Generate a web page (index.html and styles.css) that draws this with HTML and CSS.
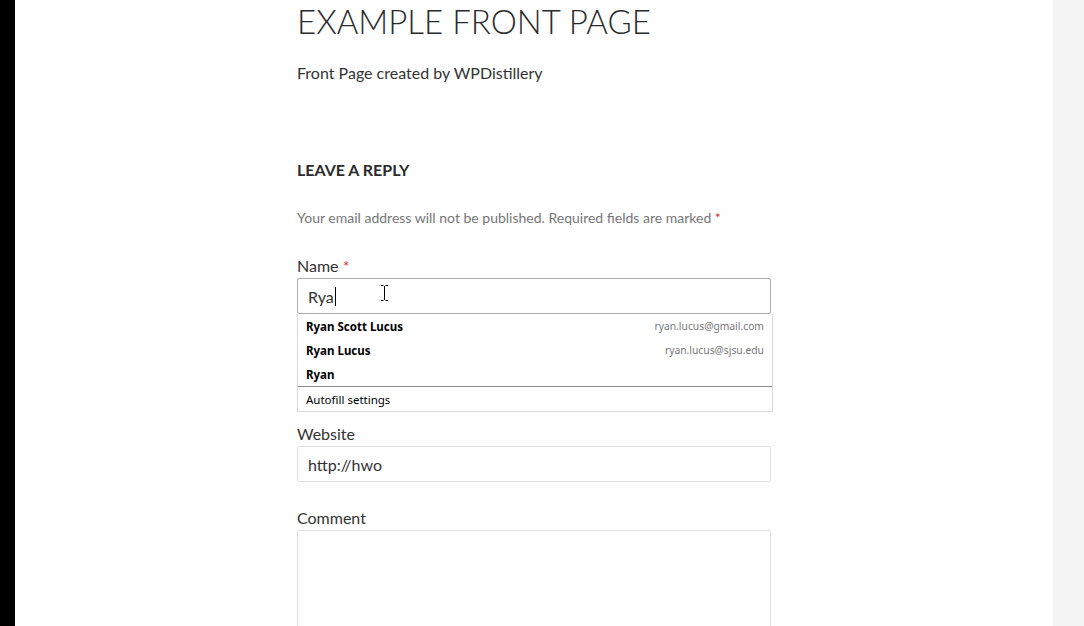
FILE: index.html
```html
<!DOCTYPE html>
<html>
<head>
<meta charset="utf-8">
<link rel="stylesheet" href="styles.css">
</head>
<body>
<div class="frame">
  <div class="strip"></div>
  <main class="page">
    <div class="column">
      <h1 class="title">EXAMPLE FRONT PAGE</h1>
      <p class="subtitle">Front Page created by WPDistillery</p>
      <h3 class="reply-title">LEAVE A REPLY</h3>
      <p class="notes">Your email address will not be published. Required fields are marked <span class="req">*</span></p>
      <div class="field">
        <label class="label">Name <span class="req">*</span></label>
        <div class="input focus"><span class="val">Rya</span><span class="caret"></span>
          <svg class="ibeam" width="9" height="16" viewBox="0 0 9 16"><path d="M1 .5h2.5M5.5.5H8M4.5 1v14M1 15.5h2.5M5.5 15.5H8" stroke="#000" stroke-width="1" fill="none"/></svg>
        </div>
        <div class="autofill">
          <div class="af-row"><span class="af-name">Ryan Scott Lucus</span><span class="af-mail">ryan.lucus@gmail.com</span></div>
          <div class="af-row"><span class="af-name">Ryan Lucus</span><span class="af-mail">ryan.lucus@sjsu.edu</span></div>
          <div class="af-row"><span class="af-name">Ryan</span></div>
          <div class="af-row af-settings">Autofill settings</div>
        </div>
      </div>
      <div class="field covered">
        <label class="label">Email <span class="req">*</span></label>
        <div class="input"></div>
      </div>
      <div class="field">
        <label class="label">Website</label>
        <div class="input"><span class="val">http://hwo</span></div>
      </div>
      <div class="field">
        <label class="label">Comment</label>
        <div class="textarea"></div>
      </div>
    </div>
  </main>
  <div class="side"></div>
</div>
</body>
</html>
```
FILE: styles.css
```css
html, body {
  margin: 0;
  padding: 0;
  height: 100%;
  overflow: hidden;
}
body {
  font-family: Lato, "Liberation Sans", sans-serif;
  color: #333;
  background: #fff;
}
.frame {
  display: flex;
  height: 626px;
  overflow: hidden;
}
.strip {
  width: 15px;
  background: #000;
  flex: none;
}
.page {
  flex: 1;
  background: #fefefe;
  padding-left: 282px;
}
.side {
  width: 31px;
  flex: none;
  background: #f3f3f3;
}
.column {
  width: 474px;
}
.title {
  margin: -1px 0 0;
  font-size: 33px;
  font-weight: 300;
  line-height: 44px;
  color: #2b2b2b;
  letter-spacing: 0;
}
.subtitle {
  margin: 19px 0 0;
  font-size: 16px;
  line-height: 22px;
}
.reply-title {
  margin: 74px 0 0;
  font-size: 16px;
  font-weight: 700;
  line-height: 24px;
  color: #2b2b2b;
}
.notes {
  margin: 25px 0 0;
  font-size: 14px;
  line-height: 22px;
  color: #777;
}
.req {
  color: #d33;
}
.field {
  position: relative;
  margin-top: 24px;
}
.notes + .field {
  margin-top: 25px;
}
.field.covered {
  visibility: hidden;
}
.label {
  display: block;
  font-size: 16px;
  line-height: 24px;
  color: #333;
}
.input {
  position: relative;
  box-sizing: border-box;
  height: 36px;
  border: 1px solid #e2e2e2;
  border-radius: 2px;
  padding: 0 10px;
  display: flex;
  align-items: center;
  font-size: 16px;
  color: #333;
}
.input.focus {
  border-color: #ababab;
}
.caret {
  width: 1px;
  height: 19px;
  background: #000;
  margin-left: 1px;
}
.ibeam {
  position: absolute;
  left: 82px;
  top: 6px;
}
.textarea {
  box-sizing: border-box;
  height: 160px;
  border: 1px solid #e2e2e2;
  border-radius: 2px;
}
.autofill {
  position: absolute;
  left: 0;
  top: 60px;
  width: 476px;
  box-sizing: border-box;
  background: #fff;
  border: 1px solid #d9d9d9;
  border-top: none;
  font-family: "Noto Sans", "Open Sans", sans-serif;
  z-index: 2;
}
.af-row {
  display: flex;
  justify-content: space-between;
  align-items: center;
  height: 24px;
  padding: 0 8px 0 8px;
}
.af-name {
  font-weight: 700;
  font-size: 11.5px;
  color: #000;
}
.af-mail {
  font-size: 10.3px;
  color: #777;
}
.af-settings {
  border-top: 1px solid #8a8a8a;
  font-size: 11.5px;
  color: #000;
}
```
